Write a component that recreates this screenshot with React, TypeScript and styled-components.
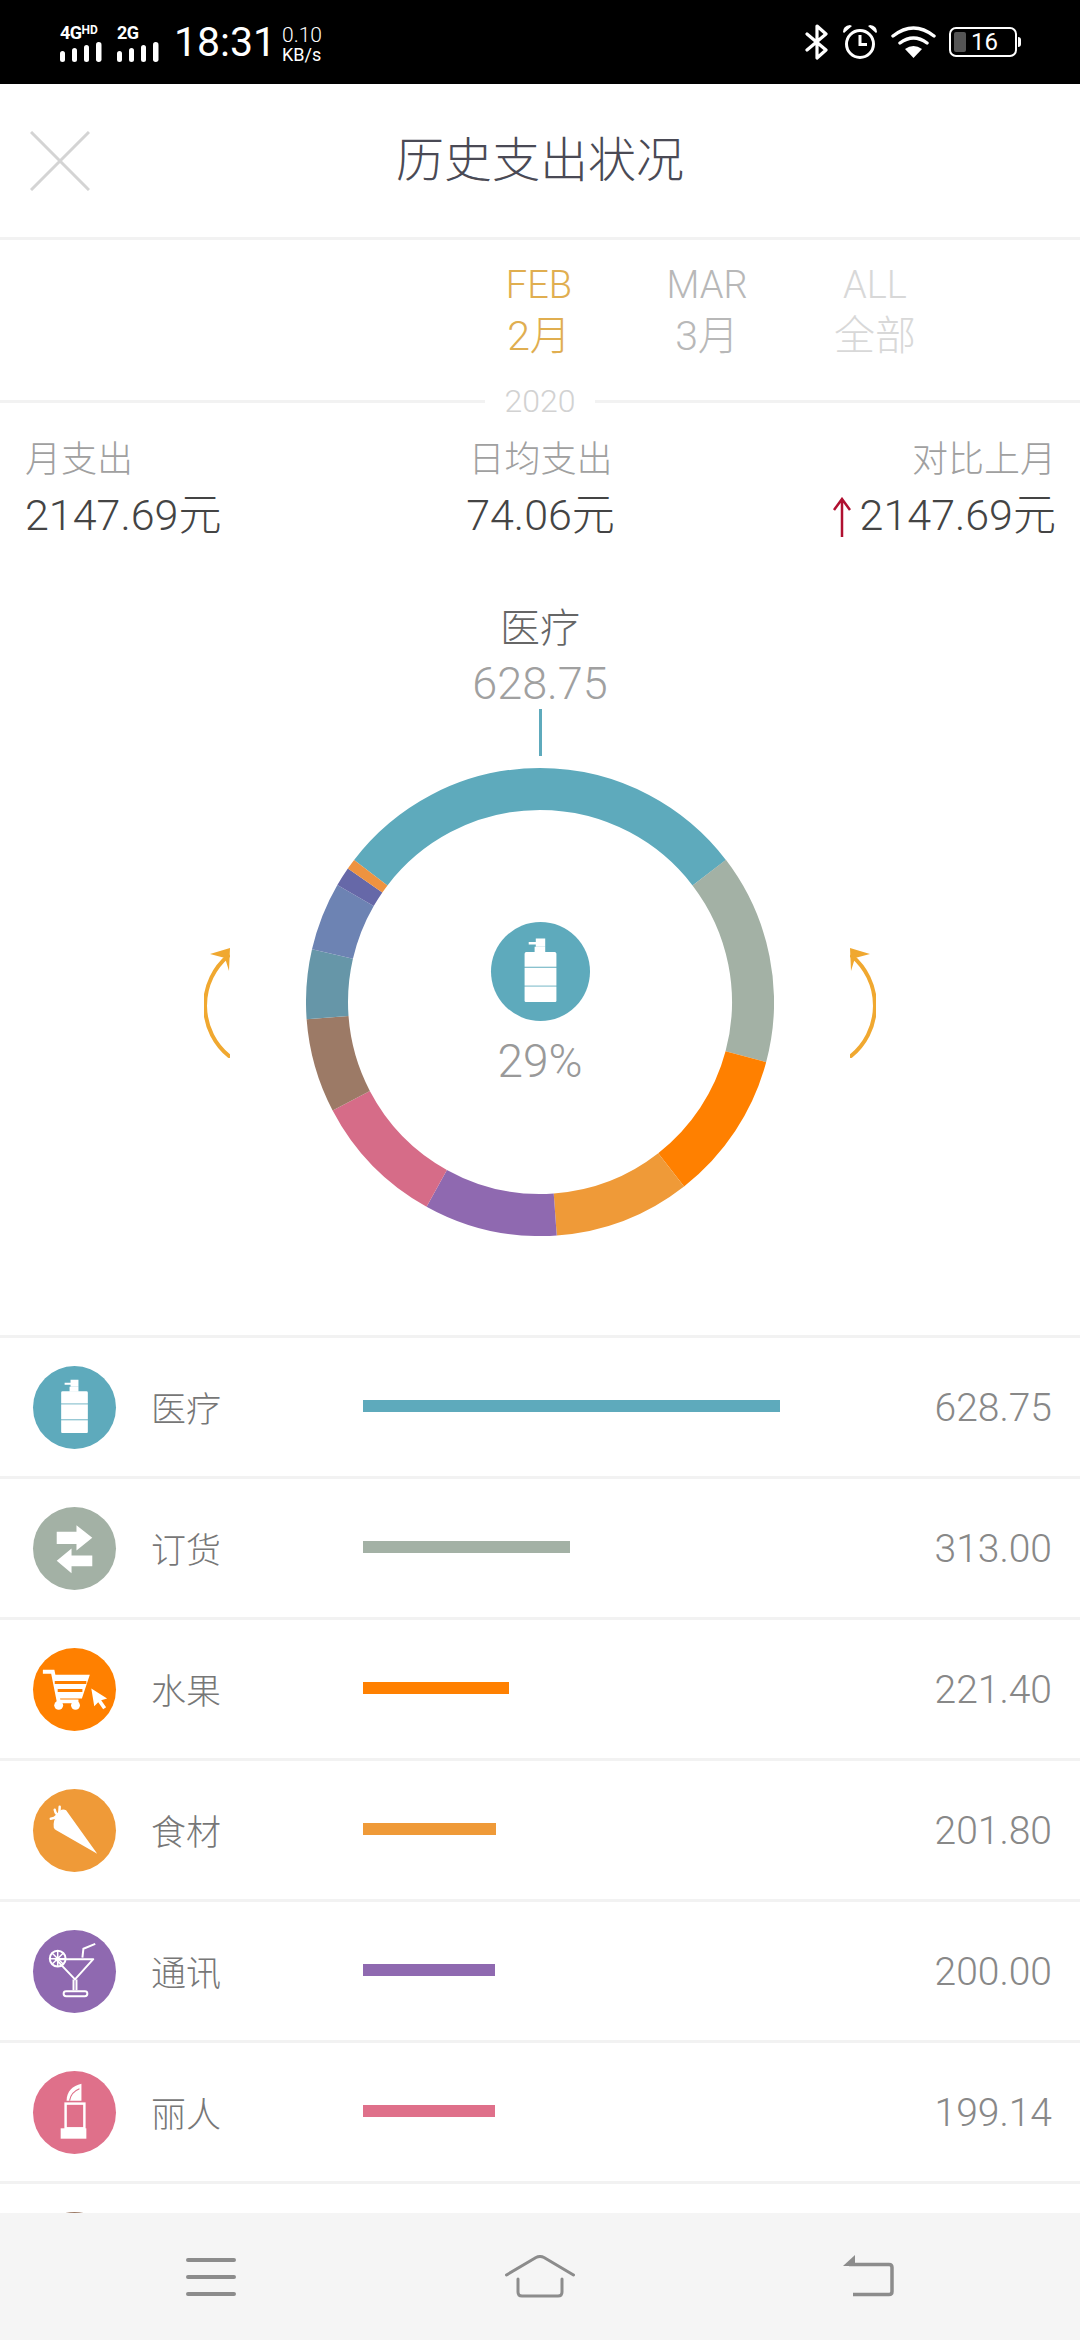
import React from 'react';
import styled, { createGlobalStyle } from 'styled-components';

const GlobalStyle = createGlobalStyle`
  html, body {
    margin: 0;
    padding: 0;
    background: #fff;
  }
  * {
    box-sizing: border-box;
  }
`;

const FONT = `Roboto, "Noto Sans CJK SC", sans-serif`;

const BottleIcon = () => (
  <svg viewBox="0 0 84 84" width="100%" height="100%">
    <path fill="#fff" d="M32 17h6v-3h8v7h-8v-2h-6z" />
    <rect x="37" y="21" width="9" height="5" fill="#fff" />
    <path fill="#fff" d="M30 25.500h24a1.500 1.500 0 0 1 1.500 1.500v11h-27v-11a1.500 1.500 0 0 1 1.500-1.500z" />
    <rect x="28.500" y="38.800" width="27" height="15.200" fill="#fff" />
    <path fill="#fff" d="M28.500 54.800h27v12a1 1 0 0 1-1 1h-25a1 1 0 0 1-1-1z" />
  </svg>
);

const SwapIcon = () => (
  <svg viewBox="0 0 84 84" width="100%" height="100%">
    <path fill="#fff" d="M24 25h20v-6.500L60 31 44 44v-6.500H24z" />
    <path fill="#fff" d="M60 49H39v-7L24 54.500 39 67v-7h21z" />
  </svg>
);

const CartIcon = () => (
  <svg viewBox="0 0 84 84" width="100%" height="100%">
    <path fill="none" stroke="#fff" strokeWidth="4" d="M10 24h10l6 30h20" />
    <path fill="#fff" d="M20 27h37.500l-8 24H25.500z" />
    <path stroke="#ff8000" strokeWidth="3" d="M22 35h32M25 43h25" />
    <circle cx="26" cy="58" r="4.500" fill="#fff" />
    <circle cx="43" cy="58" r="4.500" fill="#fff" />
    <path fill="#fff" d="M59 41l16 10-6 2 5 7-3 2-5-7-4 4z" />
  </svg>
);

const CarrotIcon = () => (
  <svg viewBox="0 0 84 84" width="100%" height="100%">
    <path fill="#fff" d="M65 65.500L33.500 21.500Q28 19 24.500 26Q20 32 21 39Q21.500 41 24 42z" />
    <path fill="none" stroke="#fff" strokeWidth="2.500" strokeLinecap="round" d="M22 21q1 5 4 5M27 18q0 5-1 8M18 30q4 0 6-3" />
  </svg>
);

const CocktailIcon = () => (
  <svg viewBox="0 0 84 84" width="100%" height="100%">
    <path fill="none" stroke="#fff" strokeWidth="2" strokeLinejoin="round" d="M23 29.500h38L42.500 50z" />
    <path fill="none" stroke="#fff" strokeWidth="2" d="M41 50v11M44 50v11M50 28l1-9 12-5" />
    <rect x="31" y="62" width="24" height="5" rx="2.500" fill="none" stroke="#fff" strokeWidth="2" />
    <circle cx="25" cy="29" r="8" fill="none" stroke="#fff" strokeWidth="2" />
    <path stroke="#fff" strokeWidth="1.500" d="M25 21v16M17 29h16M19.500 23.500l11 11M30.500 23.500l-11 11" />
  </svg>
);

const LipstickIcon = () => (
  <svg viewBox="0 0 84 84" width="100%" height="100%">
    <path fill="#fff" d="M34 30c0-9 6-15 15-17v17z" />
    <path stroke="#df708a" strokeWidth="1.200" fill="none" d="M37 30c1-6 5-10 10-12" />
    <rect x="33" y="33" width="19" height="25" fill="none" stroke="#fff" strokeWidth="2.500" />
    <rect x="28" y="58" width="26" height="10.500" fill="#fff" />
  </svg>
);

const MenuIcon = () => (
  <svg width="50" height="43" viewBox="0 0 50 43">
    <path stroke="#8c8c8c" strokeWidth="4" strokeLinecap="round" fill="none" d="M2 5h46M2 22h46M2 39h46" />
  </svg>
);

const HomeIcon = () => (
  <svg width="70" height="43" viewBox="0 0 70 43">
    <path
      stroke="#8c8c8c"
      strokeWidth="3"
      strokeLinecap="round"
      strokeLinejoin="round"
      fill="none"
      d="M1.500 20L31 2.500q4-2 8 0L68.500 20M13 24v13q0 4 4 4h36q4 0 4-4V24"
    />
  </svg>
);

const BackIcon = () => (
  <svg width="51" height="43" viewBox="0 0 51 43">
    <path fill="none" stroke="#8c8c8c" strokeWidth="3.500" d="M6 9.500h40q3 0 3 3v24q0 3-3 3H10" />
    <path fill="#8c8c8c" d="M0 11L12 0v11z" />
  </svg>
);

type SegmentData = { color: string; from: number; to: number };

const segments: SegmentData[] = [
  { color: '#5eaabc', from: -52.6, to: 52.6 },
  { color: '#a3b1a5', from: 52.6, to: 104.9 },
  { color: '#ff8000', from: 104.9, to: 142 },
  { color: '#ef9a38', from: 142, to: 175.9 },
  { color: '#8f69b0', from: 175.9, to: 209 },
  { color: '#d66c88', from: 209, to: 242.4 },
  { color: '#9c7a66', from: 242.4, to: 265.8 },
  { color: '#6696a8', from: 265.8, to: 283 },
  { color: '#6d83b3', from: 283, to: 300 },
  { color: '#6668a8', from: 300, to: 304.8 },
  { color: '#ee9340', from: 304.8, to: 307.4 },
];

const arcPath = (from: number, to: number) => {
  const r = 213;
  const c = 234;
  const point = (deg: number) => {
    const rad = (deg * Math.PI) / 180;
    return `${(c + r * Math.sin(rad)).toFixed(2)} ${(c - r * Math.cos(rad)).toFixed(2)}`;
  };
  return `M${point(from)}A${r} ${r} 0 ${to - from > 180 ? 1 : 0} 1 ${point(to)}`;
};

const rows = [
  { label: '医疗', value: '628.75', color: '#5eaabc', bar: 417, Icon: BottleIcon },
  { label: '订货', value: '313.00', color: '#a3b1a5', bar: 207, Icon: SwapIcon },
  { label: '水果', value: '221.40', color: '#ff8000', bar: 146, Icon: CartIcon },
  { label: '食材', value: '201.80', color: '#ef9a38', bar: 133, Icon: CarrotIcon },
  { label: '通讯', value: '200.00', color: '#8f69b0', bar: 132, Icon: CocktailIcon },
  { label: '丽人', value: '199.14', color: '#df708a', bar: 132, Icon: LipstickIcon },
];

const tabs = [
  { en: 'FEB', zh: '2月', color: '#e0ae50' },
  { en: 'MAR', zh: '3月', color: '#b8b8b8' },
  { en: 'ALL', zh: '全部', color: '#d8d8d8' },
];

const SignalBars = () => (
  <svg width="42" height="20" viewBox="0 0 42 20">
    <rect x="0" y="9" width="5" height="11" rx="2.500" fill="#fff" />
    <rect x="12" y="6" width="5" height="14" rx="2.500" fill="#fff" />
    <rect x="24" y="3" width="5" height="17" rx="2.500" fill="#fff" />
    <rect x="36" y="0" width="5.500" height="20" rx="2.700" fill="#fff" />
  </svg>
);

const App = () => (
  <Page>
    <GlobalStyle />
    <StatusBar>
      <SignalGroup>
        <NetworkLabel>
          4G<sup>HD</sup>
        </NetworkLabel>
        <SignalBars />
      </SignalGroup>
      <SignalGroup>
        <NetworkLabel>2G</NetworkLabel>
        <SignalBars />
      </SignalGroup>
      <Clock>18:31</Clock>
      <Speed>
        <SpeedValue>0.10</SpeedValue>
        <SpeedUnit>KB/s</SpeedUnit>
      </Speed>
      <StatusRight>
        <svg width="24" height="36" viewBox="0 0 24 36">
          <path
            fill="none"
            stroke="#fff"
            strokeWidth="3.200"
            strokeLinejoin="round"
            strokeLinecap="round"
            d="M2 10l19 16-9 8V2l9 8L2 26"
          />
        </svg>
        <svg width="36" height="36" viewBox="0 0 36 36">
          <circle cx="18" cy="20" r="13.500" fill="none" stroke="#fff" strokeWidth="3" />
          <path fill="none" stroke="#fff" strokeWidth="3" d="M18 11v9.500h7" />
          <path fill="#fff" d="M1 8q0-6 7-7l2 1-8 7zM35 8q0-6-7-7l-2 1 8 7z" />
        </svg>
        <svg width="45" height="34" viewBox="0 0 45 34">
          <path
            fill="none"
            stroke="#fff"
            strokeWidth="3.400"
            strokeLinecap="round"
            d="M2 11q20.500-16 41 0M9 18q13.500-10 27 0"
          />
          <path fill="#fff" d="M14 24q8.500-6 17 0l-8.500 9z" />
        </svg>
        <Battery>
          <BatteryFill />
          <BatteryLevel>16</BatteryLevel>
        </Battery>
      </StatusRight>
    </StatusBar>

    <Header>
      <CloseIcon width="60" height="60" viewBox="0 0 60 60">
        <path stroke="#d4d4d4" strokeWidth="3" d="M1 1l58 58M59 1L1 59" />
      </CloseIcon>
      <Title>历史支出状况</Title>
    </Header>

    <Tabs>
      {tabs.map((tab) => (
        <Tab key={tab.en} $color={tab.color}>
          <TabEn>{tab.en}</TabEn>
          <TabZh>{tab.zh}</TabZh>
        </Tab>
      ))}
    </Tabs>

    <YearDivider>
      <YearLine />
      <Year>2020</Year>
      <YearLine />
    </YearDivider>

    <Stats>
      <Stat $align="left">
        <StatLabel>月支出</StatLabel>
        <StatValue>2147.69元</StatValue>
      </Stat>
      <Stat $align="center">
        <StatLabel>日均支出</StatLabel>
        <StatValue>74.06元</StatValue>
      </Stat>
      <Stat $align="right">
        <StatLabel>对比上月</StatLabel>
        <StatValue>
          <UpArrow width="20" height="40" viewBox="0 0 20 40">
            <path fill="none" stroke="#b01030" strokeWidth="2.500" d="M10 40V2M2 13l8-11 8 11" />
          </UpArrow>
          2147.69元
        </StatValue>
      </Stat>
    </Stats>

    <Caption>
      <CaptionName>医疗</CaptionName>
      <CaptionValue>628.75</CaptionValue>
      <CaptionLine />
    </Caption>

    <ChartRow>
      <svg width="26" height="112" viewBox="0 0 26 112">
        <path fill="none" stroke="#f0a830" strokeWidth="4" strokeLinecap="round" d="M25 110A65 65 0 0 1 24 10" />
        <path fill="#f0a830" d="M26 2L6 8l15 4 4 13z" />
      </svg>
      <Ring>
        <svg width="468" height="468" viewBox="0 0 468 468">
          {segments.map((s) => (
            <path key={s.color + s.from} d={arcPath(s.from, s.to)} fill="none" stroke={s.color} strokeWidth="42" />
          ))}
        </svg>
        <RingCenter>
          <CenterIcon>
            <BottleIcon />
          </CenterIcon>
          <Percent>29%</Percent>
        </RingCenter>
      </Ring>
      <svg width="26" height="112" viewBox="0 0 26 112">
        <path fill="none" stroke="#f0a830" strokeWidth="4" strokeLinecap="round" d="M1 110A65 65 0 0 0 2 10" />
        <path fill="#f0a830" d="M0 2l20 6-15 4-4 13z" />
      </svg>
    </ChartRow>

    <List>
      {rows.map(({ label, value, color, bar, Icon }) => (
        <Row key={label}>
          <RowIcon $color={color}>
            <Icon />
          </RowIcon>
          <RowLabel>{label}</RowLabel>
          <BarTrack>
            <Bar $color={color} style={{ width: bar }} />
          </BarTrack>
          <RowValue>{value}</RowValue>
        </Row>
      ))}
      <Row>
        <RowIcon $color="#9c7a66" />
      </Row>
    </List>

    <BottomNav>
      <MenuIcon />
      <HomeIcon />
      <BackIcon />
    </BottomNav>
  </Page>
);

export default App;

const Page = styled.div`
  width: 1080px;
  height: 2340px;
  display: flex;
  flex-direction: column;
  overflow: hidden;
  background: #fff;
  font-family: ${FONT};
  font-weight: 300;
`;

const StatusBar = styled.div`
  height: 84px;
  flex-shrink: 0;
  display: flex;
  align-items: center;
  padding: 0 63px 0 60px;
  background: #000;
  color: #fff;
`;

const SignalGroup = styled.div`
  display: flex;
  flex-direction: column;
  gap: 2px;
  margin-right: 15px;
  padding-top: 3px;
`;

const NetworkLabel = styled.div`
  height: 14px;
  font-size: 18px;
  line-height: 14px;
  font-weight: 700;
  letter-spacing: -0.5px;

  sup {
    font-size: 12px;
    line-height: 0;
    vertical-align: 5px;
    letter-spacing: 0;
  }
`;

const Clock = styled.div`
  font-size: 41px;
  line-height: 48px;
  width: 108px;
  font-weight: 400;
`;

const Speed = styled.div`
  display: flex;
  flex-direction: column;
  padding-top: 3px;
`;

const SpeedValue = styled.span`
  font-size: 21px;
  line-height: 21px;
`;

const SpeedUnit = styled.span`
  font-size: 18px;
  line-height: 17px;
  font-weight: 400;
`;

const StatusRight = styled.div`
  margin-left: auto;
  display: flex;
  align-items: center;
  gap: 13px;
`;

const Battery = styled.div`
  position: relative;
  width: 68px;
  height: 30px;
  display: flex;
  align-items: center;
  padding-left: 20px;
  border: 2px solid #fff;
  border-radius: 7px;

  &::after {
    content: '';
    position: absolute;
    right: -6px;
    top: 8px;
    width: 3px;
    height: 10px;
    background: #fff;
    border-radius: 0 3px 3px 0;
  }
`;

const BatteryFill = styled.div`
  position: absolute;
  left: 3px;
  top: 3px;
  bottom: 3px;
  width: 12px;
  background: #555;
  border-radius: 2px;
`;

const BatteryLevel = styled.span`
  font-size: 24px;
  line-height: 26px;
  font-weight: 400;
`;

const Header = styled.div`
  position: relative;
  height: 156px;
  flex-shrink: 0;
  display: flex;
  align-items: center;
  justify-content: center;
  border-bottom: 3px solid #f2f2f2;
`;

const CloseIcon = styled.svg`
  position: absolute;
  left: 30px;
  top: 47px;
`;

const Title = styled.div`
  font-size: 48px;
  color: #4a4a55;
  line-height: 60px;
`;

const Tabs = styled.div`
  height: 143px;
  flex-shrink: 0;
  display: flex;
  padding: 20px 0 0 455px;
`;

const Tab = styled.div<{ $color: string }>`
  width: 168px;
  display: flex;
  flex-direction: column;
  align-items: center;
  color: ${(p) => p.$color};
`;

const TabEn = styled.span`
  font-size: 38px;
  line-height: 50px;
`;

const TabZh = styled.span`
  font-size: 41px;
  line-height: 52px;
`;

const YearDivider = styled.div`
  height: 36px;
  flex-shrink: 0;
  display: flex;
  align-items: center;
`;

const YearLine = styled.div`
  flex: 1;
  height: 3px;
  background: #f2f2f2;
`;

const Year = styled.div`
  width: 110px;
  text-align: center;
  font-size: 32px;
  line-height: 36px;
  color: #d2d2d2;
`;

const Stats = styled.div`
  flex-shrink: 0;
  display: grid;
  grid-template-columns: 1fr 1fr 1fr;
  padding: 21px 24px 0 25px;
`;

const Stat = styled.div<{ $align: string }>`
  text-align: ${(p) => p.$align};
`;

const StatLabel = styled.div`
  font-size: 36px;
  line-height: 40px;
  color: #a0a0a0;
`;

const StatValue = styled.div`
  margin-top: 10px;
  font-size: 43px;
  line-height: 50px;
  color: #444;
`;

const UpArrow = styled.svg`
  margin-right: 8px;
  vertical-align: -7px;
`;

const Caption = styled.div`
  flex-shrink: 0;
  margin-top: 64px;
  display: flex;
  flex-direction: column;
  align-items: center;
`;

const CaptionName = styled.div`
  font-size: 40px;
  line-height: 50px;
  color: #666;
`;

const CaptionValue = styled.div`
  margin-top: 5px;
  font-size: 45px;
  line-height: 50px;
  color: #a0a0a0;
`;

const CaptionLine = styled.div`
  width: 3px;
  height: 47px;
  background: #5eaabc;
`;

const ChartRow = styled.div`
  flex-shrink: 0;
  margin-top: 12px;
  display: flex;
  align-items: center;
  justify-content: center;
  gap: 76px;
`;

const Ring = styled.div`
  position: relative;
  width: 468px;
  height: 468px;
`;

const RingCenter = styled.div`
  position: absolute;
  inset: 0;
  display: flex;
  flex-direction: column;
  align-items: center;
  padding-top: 154px;
`;

const CenterIcon = styled.div`
  width: 99px;
  height: 99px;
  border-radius: 50%;
  background: #5eaabc;
`;

const Percent = styled.div`
  margin-top: 15px;
  font-size: 46px;
  line-height: 50px;
  color: #999;
`;

const List = styled.div`
  flex: 1;
  min-height: 0;
  margin-top: 99px;
  overflow: hidden;
  border-top: 3px solid #f2f2f2;
`;

const Row = styled.div`
  height: 141px;
  display: flex;
  align-items: center;
  padding: 0 28px 0 33px;
  border-bottom: 3px solid #f2f2f2;
`;

const RowIcon = styled.div<{ $color: string }>`
  width: 83px;
  height: 83px;
  flex-shrink: 0;
  border-radius: 50%;
  background: ${(p) => p.$color};
`;

const RowLabel = styled.div`
  width: 247px;
  padding: 0 0 2px 35px;
  font-size: 35px;
  color: #777;
`;

const BarTrack = styled.div`
  flex: 1;
  padding-bottom: 2px;
`;

const Bar = styled.div<{ $color: string }>`
  height: 12px;
  background: ${(p) => p.$color};
`;

const RowValue = styled.div`
  padding-top: 2px;
  font-size: 39px;
  color: #888;
`;

const BottomNav = styled.div`
  height: 127px;
  flex-shrink: 0;
  display: flex;
  align-items: center;
  justify-content: space-between;
  padding: 0 186px;
  background: #f5f5f5;
`;
